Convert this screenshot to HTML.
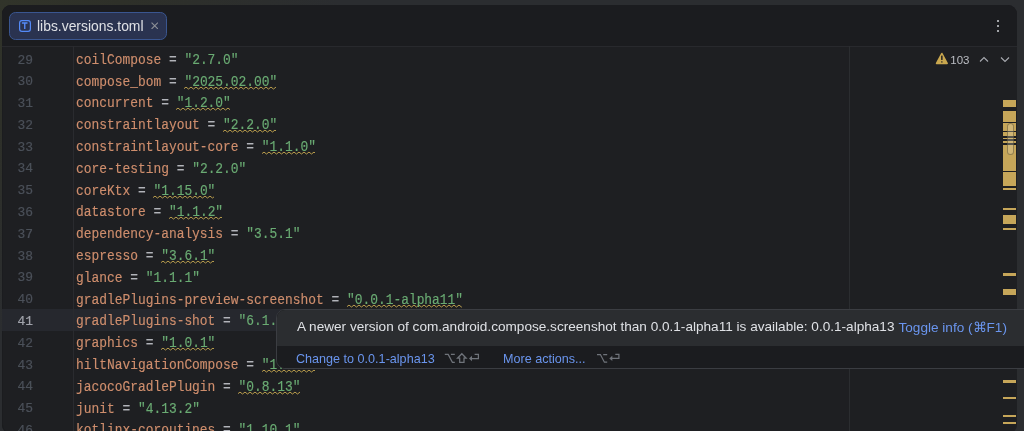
<!DOCTYPE html>
<html><head><meta charset="utf-8">
<style>
*{margin:0;padding:0;box-sizing:border-box}
html,body{width:1024px;height:431px;overflow:hidden}
body{background:radial-gradient(circle at 0 0,#31342a 0,#2e3029 120px,#2b2d30 340px);position:relative;font-family:"Liberation Sans",sans-serif}
#win{will-change:transform;position:absolute;left:2px;top:5px;width:1014.5px;height:428.5px;box-shadow:inset 1px 0 #1b1c1f;background:#1e1f22;border-radius:9px;overflow:hidden}
#tabbar{position:absolute;left:0;top:0;width:100%;height:41.5px;background:#1b1c1f;border-bottom:1px solid #28292d}
#tab{position:absolute;left:6.5px;top:7px;width:158px;height:27.5px;background:#2a3350;border:1.5px solid #3a5690;border-radius:6.5px}
#ticon{position:absolute;left:9.2px;top:6.7px}
#ttext{position:absolute;left:27.5px;top:5.4px;font-size:13.9px;color:#dfe1e5;letter-spacing:0}
#tclose{position:absolute;left:141px;top:8.8px;width:7.5px;height:7.5px}
#kebab{position:absolute;left:995px;top:14.8px;width:5px;height:14px}
#kebab i{position:absolute;left:0;width:2.3px;height:2.3px;border-radius:50%;background:#cfd1d6}
#gutter{position:absolute;left:0;top:41px;width:71.5px;height:400px;border-right:1px solid #2a2b2f}
.ln{position:absolute;left:15px;width:16px;font-family:"Liberation Mono",monospace;font-size:12.9px;-webkit-text-stroke:0.2px currentColor;color:#4b5059;text-align:right}
#margin{position:absolute;left:846.5px;top:41px;width:1px;height:400px;background:#2b2d30}
.cur{position:absolute;left:0;width:846px;background:#26282e}
.cl{color:#a1a3ab}
.code{position:absolute;left:73.5px;font-family:"Liberation Mono",monospace;font-size:14px;transform:scaleX(0.92143);transform-origin:0 0;-webkit-text-stroke:0.15px currentColor;color:#b2b4ba;white-space:pre}
.k{color:#cf8e6d}
.s{color:#6aab73}
.wv{position:absolute;height:4px;overflow:hidden}
#warn{position:absolute;left:933px;top:48px;font-size:11.5px;color:#bcbec4}
#stripe{position:absolute;left:1000.5px;top:0;width:13.5px;height:432px}
#stripe i{position:absolute;left:0;width:13.5px;background:#c6a659}
#thumb{position:absolute;left:1004.5px;top:118px;width:7.8px;height:32.3px;border-radius:4px;background:rgba(235,225,195,.28);border:1px solid rgba(70,60,35,.45)}
#popup{will-change:transform;position:absolute;left:276px;top:309.3px;width:760px;height:60.3px;background:#1e1f22;border:1px solid #3b3d42;border-radius:9px;overflow:hidden}
#popbg{position:absolute;left:0;top:0;width:100%;height:100%;background:#1b1c1f}
#poptop{position:absolute;left:0;top:0;width:100%;height:35.5px;background:#2b2d30}
.pt{position:absolute;white-space:nowrap}
.link{color:#6a95ee}
.sc{color:#6f737a}
</style></head><body>
<div id="win">
  <div id="tabbar">
    <div id="tab">
      <svg id="ticon" width="12" height="12" viewBox="0 0 12 12"><rect x="0.6" y="0.6" width="10.8" height="10.8" rx="2.3" fill="none" stroke="#548af7" stroke-width="1.2"/><path d="M2.9 3.05H8.5M5.75 3.05V9" stroke="#548af7" stroke-width="1.4" fill="none"/></svg>
      <div id="ttext">libs.versions.toml</div>
      <svg id="tclose" viewBox="0 0 8 8"><path d="M0.6 0.6L7.4 7.4M7.4 0.6L0.6 7.4" stroke="#8c8f96" stroke-width="1.25"/></svg>
    </div>
    <div id="kebab"><i style="top:0"></i><i style="top:5px"></i><i style="top:10px"></i></div>
  </div>
  <div class="cur" style="top:303.8px;height:21.8px"></div>
  <div id="gutter"></div>
  <div id="margin"></div>
  <div class="ln" style="top:47.50px">29</div>
<div class="code" style="top:46.90px"><span class="k">coilCompose</span> = <span class="s">&quot;2.7.0&quot;</span></div>
<div class="ln" style="top:69.29px">30</div>
<svg class="wv" style="left:182.14px;top:80.69px;width:92.15px" viewBox="0 0 92.15 4" preserveAspectRatio="none"><path d="M-0.5 3.0 l2.5 -1.9 l2.5 1.9 l2.5 -1.9 l2.5 1.9 l2.5 -1.9 l2.5 1.9 l2.5 -1.9 l2.5 1.9 l2.5 -1.9 l2.5 1.9 l2.5 -1.9 l2.5 1.9 l2.5 -1.9 l2.5 1.9 l2.5 -1.9 l2.5 1.9 l2.5 -1.9 l2.5 1.9 l2.5 -1.9 l2.5 1.9 l2.5 -1.9 l2.5 1.9 l2.5 -1.9 l2.5 1.9 l2.5 -1.9 l2.5 1.9 l2.5 -1.9 l2.5 1.9 l2.5 -1.9 l2.5 1.9 l2.5 -1.9 l2.5 1.9 l2.5 -1.9 l2.5 1.9 l2.5 -1.9 l2.5 1.9 l2.5 -1.9 l2.5 1.9 l2.5 -1.9 l2.5 1.9" fill="none" stroke="#b89c4c" stroke-width="1"/></svg>
<div class="code" style="top:68.69px"><span class="k">compose_bom</span> = <span class="s">&quot;2025.02.00&quot;</span></div>
<div class="ln" style="top:91.08px">31</div>
<svg class="wv" style="left:174.40px;top:102.48px;width:53.42px" viewBox="0 0 53.42 4" preserveAspectRatio="none"><path d="M-0.5 3.0 l2.5 -1.9 l2.5 1.9 l2.5 -1.9 l2.5 1.9 l2.5 -1.9 l2.5 1.9 l2.5 -1.9 l2.5 1.9 l2.5 -1.9 l2.5 1.9 l2.5 -1.9 l2.5 1.9 l2.5 -1.9 l2.5 1.9 l2.5 -1.9 l2.5 1.9 l2.5 -1.9 l2.5 1.9 l2.5 -1.9 l2.5 1.9 l2.5 -1.9 l2.5 1.9 l2.5 -1.9 l2.5 1.9" fill="none" stroke="#b89c4c" stroke-width="1"/></svg>
<div class="code" style="top:90.48px"><span class="k">concurrent</span> = <span class="s">&quot;1.2.0&quot;</span></div>
<div class="ln" style="top:112.87px">32</div>
<svg class="wv" style="left:220.87px;top:124.27px;width:53.42px" viewBox="0 0 53.42 4" preserveAspectRatio="none"><path d="M-0.5 3.0 l2.5 -1.9 l2.5 1.9 l2.5 -1.9 l2.5 1.9 l2.5 -1.9 l2.5 1.9 l2.5 -1.9 l2.5 1.9 l2.5 -1.9 l2.5 1.9 l2.5 -1.9 l2.5 1.9 l2.5 -1.9 l2.5 1.9 l2.5 -1.9 l2.5 1.9 l2.5 -1.9 l2.5 1.9 l2.5 -1.9 l2.5 1.9 l2.5 -1.9 l2.5 1.9 l2.5 -1.9 l2.5 1.9" fill="none" stroke="#b89c4c" stroke-width="1"/></svg>
<div class="code" style="top:112.27px"><span class="k">constraintlayout</span> = <span class="s">&quot;2.2.0&quot;</span></div>
<div class="ln" style="top:134.66px">33</div>
<svg class="wv" style="left:259.60px;top:146.06px;width:53.42px" viewBox="0 0 53.42 4" preserveAspectRatio="none"><path d="M-0.5 3.0 l2.5 -1.9 l2.5 1.9 l2.5 -1.9 l2.5 1.9 l2.5 -1.9 l2.5 1.9 l2.5 -1.9 l2.5 1.9 l2.5 -1.9 l2.5 1.9 l2.5 -1.9 l2.5 1.9 l2.5 -1.9 l2.5 1.9 l2.5 -1.9 l2.5 1.9 l2.5 -1.9 l2.5 1.9 l2.5 -1.9 l2.5 1.9 l2.5 -1.9 l2.5 1.9 l2.5 -1.9 l2.5 1.9" fill="none" stroke="#b89c4c" stroke-width="1"/></svg>
<div class="code" style="top:134.06px"><span class="k">constraintlayout-core</span> = <span class="s">&quot;1.1.0&quot;</span></div>
<div class="ln" style="top:156.45px">34</div>
<div class="code" style="top:155.85px"><span class="k">core-testing</span> = <span class="s">&quot;2.2.0&quot;</span></div>
<div class="ln" style="top:178.24px">35</div>
<svg class="wv" style="left:151.16px;top:189.64px;width:61.17px" viewBox="0 0 61.17 4" preserveAspectRatio="none"><path d="M-0.5 3.0 l2.5 -1.9 l2.5 1.9 l2.5 -1.9 l2.5 1.9 l2.5 -1.9 l2.5 1.9 l2.5 -1.9 l2.5 1.9 l2.5 -1.9 l2.5 1.9 l2.5 -1.9 l2.5 1.9 l2.5 -1.9 l2.5 1.9 l2.5 -1.9 l2.5 1.9 l2.5 -1.9 l2.5 1.9 l2.5 -1.9 l2.5 1.9 l2.5 -1.9 l2.5 1.9 l2.5 -1.9 l2.5 1.9 l2.5 -1.9 l2.5 1.9 l2.5 -1.9 l2.5 1.9" fill="none" stroke="#b89c4c" stroke-width="1"/></svg>
<div class="code" style="top:177.64px"><span class="k">coreKtx</span> = <span class="s">&quot;1.15.0&quot;</span></div>
<div class="ln" style="top:200.03px">36</div>
<svg class="wv" style="left:166.65px;top:211.43px;width:53.42px" viewBox="0 0 53.42 4" preserveAspectRatio="none"><path d="M-0.5 3.0 l2.5 -1.9 l2.5 1.9 l2.5 -1.9 l2.5 1.9 l2.5 -1.9 l2.5 1.9 l2.5 -1.9 l2.5 1.9 l2.5 -1.9 l2.5 1.9 l2.5 -1.9 l2.5 1.9 l2.5 -1.9 l2.5 1.9 l2.5 -1.9 l2.5 1.9 l2.5 -1.9 l2.5 1.9 l2.5 -1.9 l2.5 1.9 l2.5 -1.9 l2.5 1.9 l2.5 -1.9 l2.5 1.9" fill="none" stroke="#b89c4c" stroke-width="1"/></svg>
<div class="code" style="top:199.43px"><span class="k">datastore</span> = <span class="s">&quot;1.1.2&quot;</span></div>
<div class="ln" style="top:221.82px">37</div>
<div class="code" style="top:221.22px"><span class="k">dependency-analysis</span> = <span class="s">&quot;3.5.1&quot;</span></div>
<div class="ln" style="top:243.61px">38</div>
<svg class="wv" style="left:158.91px;top:255.01px;width:53.42px" viewBox="0 0 53.42 4" preserveAspectRatio="none"><path d="M-0.5 3.0 l2.5 -1.9 l2.5 1.9 l2.5 -1.9 l2.5 1.9 l2.5 -1.9 l2.5 1.9 l2.5 -1.9 l2.5 1.9 l2.5 -1.9 l2.5 1.9 l2.5 -1.9 l2.5 1.9 l2.5 -1.9 l2.5 1.9 l2.5 -1.9 l2.5 1.9 l2.5 -1.9 l2.5 1.9 l2.5 -1.9 l2.5 1.9 l2.5 -1.9 l2.5 1.9 l2.5 -1.9 l2.5 1.9" fill="none" stroke="#b89c4c" stroke-width="1"/></svg>
<div class="code" style="top:243.01px"><span class="k">espresso</span> = <span class="s">&quot;3.6.1&quot;</span></div>
<div class="ln" style="top:265.40px">39</div>
<div class="code" style="top:264.80px"><span class="k">glance</span> = <span class="s">&quot;1.1.1&quot;</span></div>
<div class="ln" style="top:287.19px">40</div>
<svg class="wv" style="left:344.81px;top:298.59px;width:115.39px" viewBox="0 0 115.39 4" preserveAspectRatio="none"><path d="M-0.5 3.0 l2.5 -1.9 l2.5 1.9 l2.5 -1.9 l2.5 1.9 l2.5 -1.9 l2.5 1.9 l2.5 -1.9 l2.5 1.9 l2.5 -1.9 l2.5 1.9 l2.5 -1.9 l2.5 1.9 l2.5 -1.9 l2.5 1.9 l2.5 -1.9 l2.5 1.9 l2.5 -1.9 l2.5 1.9 l2.5 -1.9 l2.5 1.9 l2.5 -1.9 l2.5 1.9 l2.5 -1.9 l2.5 1.9 l2.5 -1.9 l2.5 1.9 l2.5 -1.9 l2.5 1.9 l2.5 -1.9 l2.5 1.9 l2.5 -1.9 l2.5 1.9 l2.5 -1.9 l2.5 1.9 l2.5 -1.9 l2.5 1.9 l2.5 -1.9 l2.5 1.9 l2.5 -1.9 l2.5 1.9 l2.5 -1.9 l2.5 1.9 l2.5 -1.9 l2.5 1.9 l2.5 -1.9 l2.5 1.9 l2.5 -1.9 l2.5 1.9 l2.5 -1.9 l2.5 1.9" fill="none" stroke="#b89c4c" stroke-width="1"/></svg>
<div class="code" style="top:286.59px"><span class="k">gradlePlugins-preview-screenshot</span> = <span class="s">&quot;0.0.1-alpha11&quot;</span></div>
<div class="ln cl" style="top:308.98px">41</div>
<div class="code" style="top:308.38px"><span class="k">gradlePlugins-shot</span> = <span class="s">&quot;6.1.0&quot;</span></div>
<div class="ln" style="top:330.77px">42</div>
<svg class="wv" style="left:158.91px;top:342.17px;width:53.42px" viewBox="0 0 53.42 4" preserveAspectRatio="none"><path d="M-0.5 3.0 l2.5 -1.9 l2.5 1.9 l2.5 -1.9 l2.5 1.9 l2.5 -1.9 l2.5 1.9 l2.5 -1.9 l2.5 1.9 l2.5 -1.9 l2.5 1.9 l2.5 -1.9 l2.5 1.9 l2.5 -1.9 l2.5 1.9 l2.5 -1.9 l2.5 1.9 l2.5 -1.9 l2.5 1.9 l2.5 -1.9 l2.5 1.9 l2.5 -1.9 l2.5 1.9 l2.5 -1.9 l2.5 1.9" fill="none" stroke="#b89c4c" stroke-width="1"/></svg>
<div class="code" style="top:330.17px"><span class="k">graphics</span> = <span class="s">&quot;1.0.1&quot;</span></div>
<div class="ln" style="top:352.56px">43</div>
<svg class="wv" style="left:259.60px;top:363.96px;width:53.42px" viewBox="0 0 53.42 4" preserveAspectRatio="none"><path d="M-0.5 3.0 l2.5 -1.9 l2.5 1.9 l2.5 -1.9 l2.5 1.9 l2.5 -1.9 l2.5 1.9 l2.5 -1.9 l2.5 1.9 l2.5 -1.9 l2.5 1.9 l2.5 -1.9 l2.5 1.9 l2.5 -1.9 l2.5 1.9 l2.5 -1.9 l2.5 1.9 l2.5 -1.9 l2.5 1.9 l2.5 -1.9 l2.5 1.9 l2.5 -1.9 l2.5 1.9 l2.5 -1.9 l2.5 1.9" fill="none" stroke="#b89c4c" stroke-width="1"/></svg>
<div class="code" style="top:351.96px"><span class="k">hiltNavigationCompose</span> = <span class="s">&quot;1.2.0&quot;</span></div>
<div class="ln" style="top:374.35px">44</div>
<svg class="wv" style="left:236.37px;top:385.75px;width:61.17px" viewBox="0 0 61.17 4" preserveAspectRatio="none"><path d="M-0.5 3.0 l2.5 -1.9 l2.5 1.9 l2.5 -1.9 l2.5 1.9 l2.5 -1.9 l2.5 1.9 l2.5 -1.9 l2.5 1.9 l2.5 -1.9 l2.5 1.9 l2.5 -1.9 l2.5 1.9 l2.5 -1.9 l2.5 1.9 l2.5 -1.9 l2.5 1.9 l2.5 -1.9 l2.5 1.9 l2.5 -1.9 l2.5 1.9 l2.5 -1.9 l2.5 1.9 l2.5 -1.9 l2.5 1.9 l2.5 -1.9 l2.5 1.9 l2.5 -1.9 l2.5 1.9" fill="none" stroke="#b89c4c" stroke-width="1"/></svg>
<div class="code" style="top:373.75px"><span class="k">jacocoGradlePlugin</span> = <span class="s">&quot;0.8.13&quot;</span></div>
<div class="ln" style="top:396.14px">45</div>
<div class="code" style="top:395.54px"><span class="k">junit</span> = <span class="s">&quot;4.13.2&quot;</span></div>
<div class="ln" style="top:417.93px">46</div>
<svg class="wv" style="left:236.37px;top:429.33px;width:61.17px" viewBox="0 0 61.17 4" preserveAspectRatio="none"><path d="M-0.5 3.0 l2.5 -1.9 l2.5 1.9 l2.5 -1.9 l2.5 1.9 l2.5 -1.9 l2.5 1.9 l2.5 -1.9 l2.5 1.9 l2.5 -1.9 l2.5 1.9 l2.5 -1.9 l2.5 1.9 l2.5 -1.9 l2.5 1.9 l2.5 -1.9 l2.5 1.9 l2.5 -1.9 l2.5 1.9 l2.5 -1.9 l2.5 1.9 l2.5 -1.9 l2.5 1.9 l2.5 -1.9 l2.5 1.9 l2.5 -1.9 l2.5 1.9 l2.5 -1.9 l2.5 1.9" fill="none" stroke="#b89c4c" stroke-width="1"/></svg>
<div class="code" style="top:417.33px"><span class="k">kotlinx-coroutines</span> = <span class="s">&quot;1.10.1&quot;</span></div>
  <div id="warn"><svg width="14" height="13" viewBox="0 0 14 13" style="position:absolute;left:0;top:-1px"><path d="M6.85 1.6L12.1 11.3H1.6Z" fill="#c9a74f" stroke="#c9a74f" stroke-width="1.7" stroke-linejoin="round"/><rect x="6.1" y="3.4" width="1.5" height="4.6" rx="0.5" fill="#1e1f22"/><rect x="6.1" y="9.3" width="1.5" height="1.3" rx="0.4" fill="#1e1f22"/></svg><span style="position:absolute;left:15.3px;top:0.7px">103</span></div>
  <svg width="10" height="7" viewBox="0 0 10 7" style="position:absolute;left:977px;top:51px"><path d="M1 5.5 L5 1.5 L9 5.5" fill="none" stroke="#a8aab0" stroke-width="1.1"/></svg>
  <svg width="10" height="7" viewBox="0 0 10 7" style="position:absolute;left:998px;top:51px"><path d="M1 1.5 L5 5.5 L9 1.5" fill="none" stroke="#a8aab0" stroke-width="1.1"/></svg>
  <div id="stripe"><i style="top:94.60px;height:7.40px"></i><i style="top:105.90px;height:11.00px"></i><i style="top:117.80px;height:8.00px"></i><i style="top:127.00px;height:3.90px"></i><i style="top:132.50px;height:1.90px"></i><i style="top:135.50px;height:2.30px"></i><i style="top:139.50px;height:26.00px"></i><i style="top:166.90px;height:14.60px"></i><i style="top:182.60px;height:2.70px"></i><i style="top:202.90px;height:2.40px"></i><i style="top:209.90px;height:9.20px"></i><i style="top:222.70px;height:2.50px"></i><i style="top:268.00px;height:2.60px"></i><i style="top:284.00px;height:6.30px"></i><i style="top:374.50px;height:3.90px"></i><i style="top:391.90px;height:2.60px"></i><i style="top:409.80px;height:2.30px"></i><i style="top:416.70px;height:2.40px"></i></div>
  <div id="thumb"></div>
</div>
<div id="popup">
  <div id="popbg"></div><div id="poptop"></div>
  <div class="pt" style="left:20px;top:8.8px;font-size:13.6px;color:#dfe1e5">A newer version of com.android.compose.screenshot than 0.0.1-alpha11 is available: 0.0.1-alpha13</div>
  <div class="pt link" style="left:621.5px;top:8.8px;font-size:13.6px;letter-spacing:0">Toggle info (⌘F1)</div>
  <div class="pt link" style="left:19px;top:41.8px;font-size:12.6px">Change to 0.0.1-alpha13</div>
  <div class="pt link" style="left:226px;top:41.8px;font-size:12.6px">More actions...</div>
</div>
<svg style="position:absolute;left:0;top:0" width="1024" height="431" viewBox="0 0 1024 431">
<g fill="none" stroke="#6f737a" stroke-width="1.25" stroke-linejoin="miter">
<path d="M444.8 354.4H448.2L452.4 362.3H454.8M450.9 354.4H454.8"/>
<path d="M461.85 353.7L466.2 358.2H464V362.3H459.7V358.2H457.5Z"/>
<path d="M471.5 358.5H478.4V354.3H474.6"/>
<path d="M597 354.5H600.4L604.4 362.2H607.2M603.2 354.5H607.2"/>
<path d="M611.8 358.4H618.9V354.3H615.3"/>
</g>
<g fill="#6f737a">
<path d="M469 358.5L472 355.8V361.2Z"/>
<path d="M609.3 358.4L612.3 355.7V361.1Z"/>
</g>
</svg>
</body></html>
